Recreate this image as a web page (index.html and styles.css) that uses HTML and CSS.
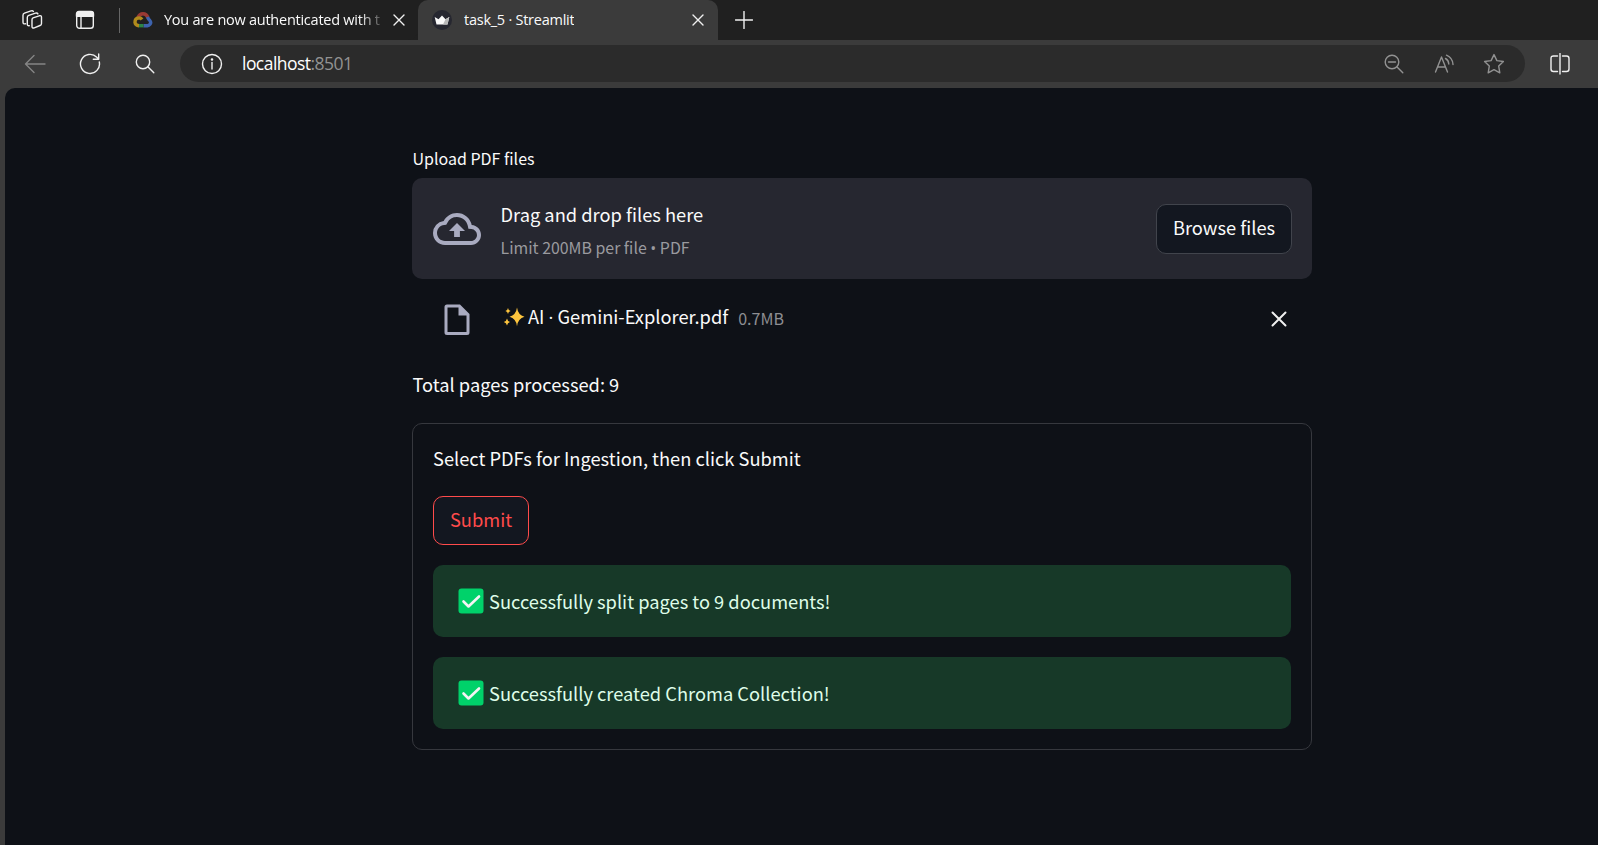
FILE: index.html
```
<!DOCTYPE html>
<html lang="en">
<head>
<meta charset="utf-8">
<title>task_5 · Streamlit</title>
<link rel="stylesheet" href="styles.css">
</head>
<body>
<header class="tabs">
  <svg class="ico workspaces" width="24" height="24" viewBox="0 0 24 24"><path d="M12 9.600 18.200 7.600Q20.500 7 20.500 9V15.200Q20.500 16.700 19 17.300L13.300 19.600Q11 20.400 11 18.200V11.500Q11 10 12 9.600ZM8.300 17.500Q6.300 17.800 6.300 16V9.200Q6.300 7.700 7.800 7.200L14.500 4.900Q16.300 4.400 16.900 5.700M4.500 15.600Q2 15.900 2 14V7Q2 5.500 3.500 5L10 2.700Q11.800 2.200 12.400 3.300" transform="translate(0 .2)"/></svg>
  <svg class="ico tabmenu" width="20" height="20" viewBox="0 0 20 20"><rect x="1.700" y="1.700" width="16.600" height="16.600" rx="2.800"/><path d="M6 6V18"/><path class="solid" d="M1.500 6.200V4Q1.500 1.500 4 1.500H16Q18.500 1.500 18.500 4V6.200Z"/></svg>
  <span class="sep"></span>
  <div class="tab idle">
    <svg class="cloud" width="20" height="16" viewBox="0 0 20 16"><path d="M5 5.500Q6.500 1.800 10 1.800T15 5.800" stroke="#9a3a34"/><path d="M14.500 5Q15.200 7 16.700 8.300 18.500 10.300 17 12.300 16 13.700 14.500 13.700H10.500" stroke="#3d63ae"/><path d="M10.500 13.700H5.500" stroke="#2d8545"/><path d="M6 13.700Q2.500 13.500 2 10.500 1.800 6.300 6 5.900 8 5.900 9 7.500" stroke="#b08a1c"/></svg>
    <span class="tab-title fade">You are now authenticated with t</span>
    <svg class="ico x" width="12" height="12" viewBox="0 0 12 12"><path d="M1 1 11 11M11 1 1 11"/></svg>
  </div>
  <div class="tab active">
    <svg class="crown" width="20" height="20" viewBox="0 0 20 20"><circle cx="10" cy="10" r="10" fill="#262730"/><path d="M2.700 7 6.500 9.300 10 5.500 13.500 9.300 17.300 7 15.500 14.500H4.500Z" fill="#fafafa"/><path d="M13.500 9.300 17.300 7 15.500 14.500H11Z" fill="#b9b9b9"/></svg>
    <span class="tab-title">task_5 · Streamlit</span>
    <svg class="ico x" width="12" height="12" viewBox="0 0 12 12"><path d="M1 1 11 11M11 1 1 11"/></svg>
  </div>
  <svg class="ico plus" width="18" height="18" viewBox="0 0 18 18"><path d="M9 .5V17.500M.5 9H17.500"/></svg>
</header>
<nav class="toolbar">
  <svg class="ico back" width="22" height="20" viewBox="0 0 22 20"><path d="M21 10H1.500M10 1.500 1.500 10 10 18.500"/></svg>
  <svg class="ico reload" width="22" height="22" viewBox="0 0 22 22"><path d="M20.300 9A9.500 9.500 0 1 1 17.800 4.300L19.500 6M19.700 1V6.300H14.300"/></svg>
  <svg class="ico search" width="20" height="20" viewBox="0 0 20 20"><circle cx="8" cy="8" r="6.700"/><path d="M12.800 12.800 18.800 18.800"/></svg>
  <div class="address">
    <svg class="ico info" width="22" height="22" viewBox="0 0 22 22"><circle cx="11" cy="11" r="9.500"/><path d="M11 9.500V16"/><circle class="solid" cx="11" cy="6.500" r=".6"/></svg>
    <span class="url">localhost<span class="port">:8501</span></span>
    <svg class="ico dim zoomout" width="20" height="20" viewBox="0 0 20 20"><circle cx="8" cy="8" r="6.800"/><path d="M12.800 12.800 18.800 18.800M4.500 8H11.500"/></svg>
    <svg class="ico dim read" width="22" height="20" viewBox="0 0 22 20"><path d="M1.500 18 7.500 3 13.500 18M3.600 13H11.400M11.500 4.500Q14.500 6 14.800 10M12.500 1.200Q18.700 4 19 10.500"/></svg>
    <svg class="ico dim star" width="22" height="22" viewBox="0 0 22 22"><path d="M11 1.600 13.900 7.600 20.400 8.500 15.700 13.100 16.800 19.800 11 16.700 5.200 19.800 6.300 13.100 1.600 8.500 8.100 7.600Z"/></svg>
  </div>
  <svg class="ico split" width="22" height="22" viewBox="0 0 22 22"><path d="M8.500 3H4.500Q2 3 2 5.500V16Q2 18.500 4.500 18.500H8.500M13.500 3H17.500Q20 3 20 5.500V16Q20 18.500 17.500 18.500H13.500M11 .5V21"/></svg>
</nav>
<main class="page">
  <div class="column">
    <label class="label">Upload PDF files</label>
    <section class="dropzone">
      <svg class="upload" width="48" height="48" viewBox="0 0 24 24"><path d="M19.350 10.040A7.490 7.490 0 0 0 12 4C9.110 4 6.600 5.640 5.350 8.040A5.994 5.994 0 0 0 0 14c0 3.310 2.690 6 6 6h13c2.760 0 5-2.240 5-5 0-2.640-2.050-4.780-4.650-4.960zM19 18H6c-2.210 0-4-1.790-4-4 0-2.050 1.530-3.760 3.560-3.970l1.070-.11.500-.95A5.469 5.469 0 0 1 12 6c2.620 0 4.880 1.860 5.390 4.430l.3 1.500 1.530.11A2.980 2.980 0 0 1 22 15c0 1.650-1.350 3-3 3zM8 13h2.550v3h2.900v-3H16l-4-4z"/></svg>
      <div class="drop-text">
        <span class="drop-title">Drag and drop files here</span>
        <span class="drop-hint">Limit 200MB per file <span class="dot">•</span> PDF</span>
      </div>
      <button class="btn browse">Browse files</button>
    </section>
    <div class="file">
      <svg class="doc" width="26" height="32" viewBox="0 0 26 32"><path fill-rule="evenodd" d="M3 .5H16L25.500 10V28.500Q25.500 31 23 31H3Q.5 31 .5 28.500V3Q.5 .5 3 .5ZM14.500 3.500H3.500V28H22.500V11.500H14.500Z"/></svg>
      <svg class="sparkle" width="22" height="20" viewBox="0 0 22 20"><path d="M14 .5Q15 8 21.500 9.800 15 11.500 14 19.200 13 11.500 6.500 9.800 13 8 14 .5Z"/><path d="M5 1Q5.400 3.400 7.600 4 5.400 4.600 5 7 4.600 4.600 2.400 4 4.600 3.400 5 1ZM4 11.500Q4.500 14.400 7.200 15 4.500 15.600 4 18.500 3.500 15.600 .8 15 3.500 14.400 4 11.500Z"/></svg>
      <span class="file-name">AI <span class="dot">·</span> Gemini-Explorer.pdf</span>
      <span class="file-size">0.7MB</span>
      <svg class="ico remove" width="16" height="16" viewBox="0 0 16 16"><path d="M1.500 1.500 14.500 14.500M14.500 1.500 1.500 14.500"/></svg>
    </div>
    <p class="total">Total pages processed: 9</p>
    <form class="card">
      <p class="card-title">Select PDFs for Ingestion, then click Submit</p>
      <button class="btn submit" type="button">Submit</button>
      <div class="alert"><svg class="check" width="26" height="26" viewBox="0 0 26 26"><rect x=".5" y=".5" width="25" height="25" rx="3"/><path d="M5.500 13.500 10.500 18.500 21 8.500"/></svg><span class="alert-text">Successfully split pages to 9 documents!</span></div>
      <div class="alert"><svg class="check" width="26" height="26" viewBox="0 0 26 26"><rect x=".5" y=".5" width="25" height="25" rx="3"/><path d="M5.500 13.500 10.500 18.500 21 8.500"/></svg><span class="alert-text">Successfully created Chroma Collection!</span></div>
    </form>
  </div>
</main>
</body>
</html>
```

FILE: styles.css
```
* { box-sizing: border-box; }
body {
  margin: 0;
  width: 1598px;
  height: 845px;
  overflow: hidden;
  display: flex;
  flex-direction: column;
  background: #3b3b3b;
  color: #fafafa;
  font-family: "Noto Sans CJK SC", "Noto Sans", sans-serif;
  font-size: 18.300px;
}
p { margin: 0; }
svg { display: block; flex: none; }
.ico { fill: none; stroke: #f0f0f0; stroke-width: 1.4; stroke-linecap: round; stroke-linejoin: round; }
.ico .solid { fill: #f0f0f0; }
.dim { stroke: #929292; }

.tabs { height: 40px; flex: none; display: flex; align-items: center; background: #202020; }
.workspaces { margin-left: 21px; }
.tabmenu { margin-left: 30px; }
.sep { width: 1px; height: 25px; margin-left: 24px; background: #666; }
.tab { display: flex; align-items: center; height: 40px; font: 14.500px/40px "Open Sans", "Noto Sans", sans-serif; }
.idle { width: 298px; padding: 0 13px 0 13px; border-radius: 0 0 10px 0; background: #202020; }
.active { width: 300px; padding: 0 14px; border-radius: 10px 10px 0 0; background: #3b3b3b; }
.cloud { fill: none; stroke-width: 3.400; }
.tab-title { margin-left: 12px; white-space: nowrap; overflow: hidden; letter-spacing: -.25px; }
.fade { width: 220px; margin-left: 11px; -webkit-mask-image: linear-gradient(90deg, #000 195px, transparent 223px); mask-image: linear-gradient(90deg, #000 195px, transparent 223px); }
.tab .x { margin-left: auto; }
.plus { margin-left: 17px; }

.toolbar { height: 48px; flex: none; display: flex; align-items: center; padding-bottom: 1px; }
.back { margin-left: 24px; stroke: #858585; }
.reload { margin-left: 33px; }
.search { margin-left: 34px; }
.address { display: flex; align-items: center; width: 1345px; height: 37px; margin-left: 25px; padding-right: 20px; border-radius: 19px; background: #2b2b2b; }
.info { margin-left: 21px; }
.url { margin-left: 19px; padding-bottom: 2px; font: 17.500px/34px "Open Sans", "Noto Sans", sans-serif; letter-spacing: -.54px; color: #fff; }
.port { color: #929292; }
.zoomout { margin-left: auto; }
.read { margin-left: 30px; }
.star { margin-left: 27px; }
.split { margin-left: 24px; }

.page { flex: 1; margin-left: 5px; padding: 56px 0 0 407px; border-radius: 10px 0 0 0; background: #0e1117; }
.column { width: 900px; display: flex; flex-direction: column; }
.label { margin-left: .5px; font-size: 16px; line-height: 28px; }
.dropzone { display: flex; align-items: center; height: 101px; margin-top: 6px; padding: 0 20px; border-radius: 10px; background: #262730; }
.upload { margin-left: .5px; fill: #a9abc0; }
.drop-text { display: flex; flex-direction: column; gap: 4px; padding-top: 3px; margin-left: 20px; }
.drop-title { line-height: 32px; }
.drop-hint { font-size: 15.900px; line-height: 28px; color: #9a9a9f; }
.dot { font-family: "Open Sans", "Noto Sans", sans-serif; line-height: 1; }
.btn { font: inherit; color: #fafafa; padding: 0 0 3px; background: #131720; border: 1px solid #41444c; border-radius: 10px; text-align: center; }
.browse { width: 136px; height: 50px; margin-left: auto; }
.file { display: flex; align-items: center; height: 30px; margin-top: 22px; padding: 0 25px 0 32px; white-space: nowrap; }
.doc { fill: #a9abc0; position: relative; top: 4px; }
.sparkle { margin-left: 33px; fill: #fdc53e; position: relative; top: 1px; }
.file-name { margin-left: 3px; line-height: 30px; }
.file-size { margin-left: 10px; padding-top: 3px; font-size: 16px; line-height: 30px; color: #8d8e92; }
.remove { margin-left: auto; stroke-width: 2; position: relative; top: 3px; }
.total { margin: 38px 0 0 .5px; line-height: 30px; }
.card { display: flex; flex-direction: column; align-items: flex-start; gap: 20px; height: 327px; margin-top: 23.500px; padding: 19.500px 20px; border: 1px solid #36383e; border-radius: 10px; }
.card-title { line-height: 30px; margin-bottom: 3px; }
.submit { width: 96px; height: 49px; color: #ff4b4b; border-color: #ff4b4b; }
.alert { display: flex; align-items: center; width: 858px; height: 72px; padding-left: 25px; border-radius: 10px; background: #173928; color: #dffde9; }
.check { fill: #00d26a; }
.check path { fill: none; stroke: #f4f4f4; stroke-width: 2.600; stroke-linecap: round; stroke-linejoin: round; }
.alert-text { margin-left: 5px; line-height: 30px; }
```
